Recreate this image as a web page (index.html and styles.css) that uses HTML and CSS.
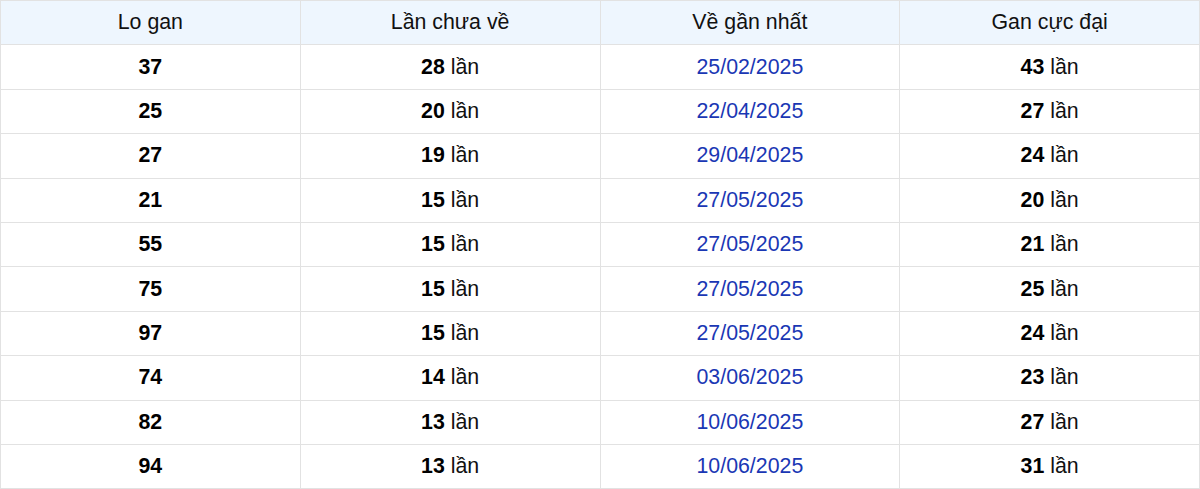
FILE: index.html
```html
<!DOCTYPE html>
<html lang="vi">
<head>
<meta charset="utf-8">
<link rel="stylesheet" href="styles.css">
</head>
<body>
<table class="gan">
<thead>
<tr><th>Lo gan</th><th>Lần chưa về</th><th>Về gần nhất</th><th>Gan cực đại</th></tr>
</thead>
<tbody>
<tr><td><b>37</b></td><td><b>28</b> lần</td><td class="date">25/02/2025</td><td><b>43</b> lần</td></tr>
<tr><td><b>25</b></td><td><b>20</b> lần</td><td class="date">22/04/2025</td><td><b>27</b> lần</td></tr>
<tr><td><b>27</b></td><td><b>19</b> lần</td><td class="date">29/04/2025</td><td><b>24</b> lần</td></tr>
<tr><td><b>21</b></td><td><b>15</b> lần</td><td class="date">27/05/2025</td><td><b>20</b> lần</td></tr>
<tr><td><b>55</b></td><td><b>15</b> lần</td><td class="date">27/05/2025</td><td><b>21</b> lần</td></tr>
<tr><td><b>75</b></td><td><b>15</b> lần</td><td class="date">27/05/2025</td><td><b>25</b> lần</td></tr>
<tr><td><b>97</b></td><td><b>15</b> lần</td><td class="date">27/05/2025</td><td><b>24</b> lần</td></tr>
<tr><td><b>74</b></td><td><b>14</b> lần</td><td class="date">03/06/2025</td><td><b>23</b> lần</td></tr>
<tr><td><b>82</b></td><td><b>13</b> lần</td><td class="date">10/06/2025</td><td><b>27</b> lần</td></tr>
<tr><td><b>94</b></td><td><b>13</b> lần</td><td class="date">10/06/2025</td><td><b>31</b> lần</td></tr>
</tbody>
</table>
</body>
</html>
```
FILE: styles.css
```css
html, body {
  margin: 0;
  padding: 0;
  background: #ffffff;
}
body {
  font-family: "Liberation Sans", Arial, sans-serif;
  font-size: 16pt;
  color: #111111;
}
.gan {
  width: 1200px;
  border-collapse: collapse;
  table-layout: fixed;
}
.gan th,
.gan td {
  border: 1px solid #e2e2e2;
  height: 44.4px;
  padding: 0;
  text-align: center;
  vertical-align: middle;
  box-sizing: border-box;
}
.gan th {
  background: #eef6fe;
  font-weight: normal;
}
.gan b {
  font-weight: bold;
  color: #000000;
}
.gan .date {
  color: #1a37b4;
}
```
